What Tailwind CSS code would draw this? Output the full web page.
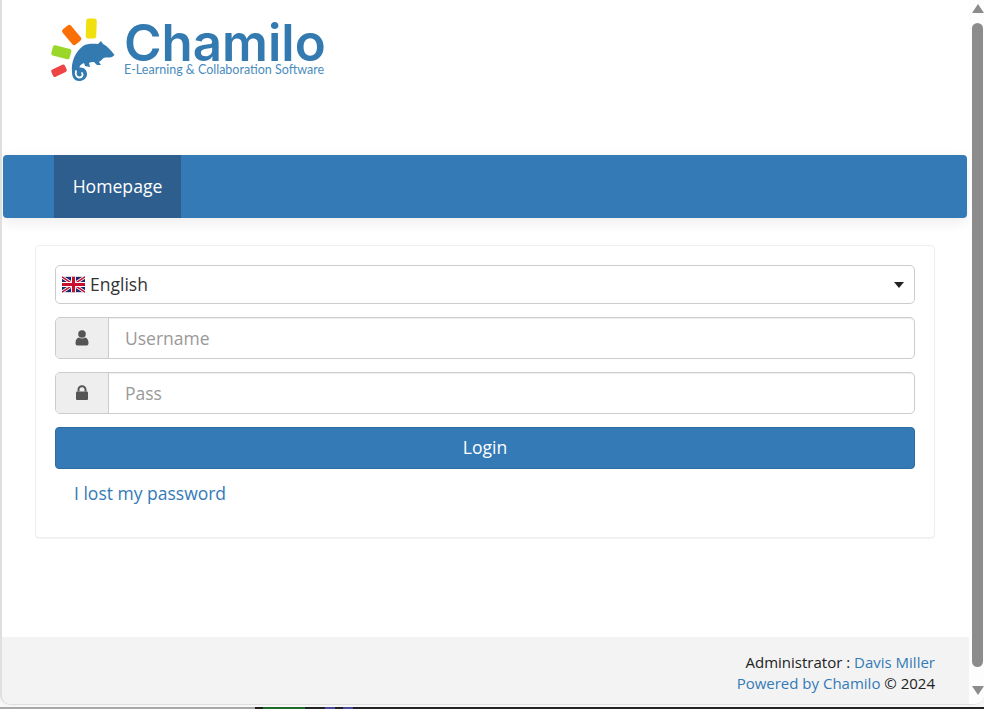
<!DOCTYPE html>
<html lang="en">
<head>
    <meta charset="UTF-8">
    <title>Chamilo - Homepage</title>
    <script src="https://cdn.jsdelivr.net/npm/@tailwindcss/browser@4"></script>
</head>
<body class="w-[984px] h-[709px] overflow-hidden bg-[#f6f6f6] font-['Open_Sans',sans-serif] text-[#222]">
    <!-- Window -->
    <div class="h-[705px] flex bg-white border-l-2 border-b border-[#dfdfdf] rounded-bl-[10px] rounded-br-[10px] overflow-hidden">
        <div class="w-[967px] flex flex-col shrink-0">
            <!-- Logo -->
            <header class="h-[155px] shrink-0 pl-[48px] pt-[15px]">
                <div class="flex items-start gap-[6px]">
                    <svg class="w-[68px] h-[68px] shrink-0" viewBox="50 15 68 68">
                        <rect x="86" y="18.500" width="10.500" height="20" rx="2.500" fill="#f0e010" transform="rotate(2 91 28)"/>
                        <rect x="66.200" y="25" width="11" height="20" rx="2.500" fill="#fb7006" transform="rotate(-40 71.700 35)"/>
                        <rect x="51.800" y="47" width="19" height="10.500" rx="2" fill="#9bd728" transform="rotate(15 61.300 52.300)"/>
                        <rect x="51.500" y="66.700" width="15" height="8" rx="2" fill="#ee4444" transform="rotate(-25 59 70.700)"/>
                        <path fill="#337ab0" d="M101 41 L103 44 C107 46 111 50 114.500 55 L112 57 C109 58 106 57 103.500 58 C102 60 100 61 99 62 L101 65 L97 65 L94 62 C92 62 90 62 89 63 L90 67 L85 66 L84 63 C81 64 79.500 66 79.500 67.500 C84 67 87 70 87 74 C87 78.500 83 81 79 81 C75 81 72 78 72 72 C71 62 75 52 83 46 C88 43 94 44 98 44 C99 43 100 42 101 41 Z"/>
                        <path fill="none" stroke="#fff" stroke-width="1.800" stroke-linecap="round" d="M76 71 C75 75 77 77.500 79.500 77.500 C82 77.500 83.500 75 82 73"/>
                    </svg>
                    <div class="text-[#337ab0]">
                        <div class="font-['Inter',sans-serif] font-semibold text-[51px] leading-[42px] mt-[7px]">Chamilo</div>
                        <div class="text-[12.500px] leading-[12px] font-['Lato',sans-serif] text-[#4a8cbd] whitespace-nowrap">E-Learning &amp; Collaboration Software</div>
                    </div>
                </div>
            </header>

            <!-- Nav -->
            <nav class="ml-px w-[964px] h-[63px] shrink-0 pl-[51px] flex bg-[#337ab7] rounded-[4px] shadow-[0_4px_14px_rgba(0,0,0,0.08)]">
                <a class="w-[127px] flex items-center justify-center bg-[#2e5e8e] text-white text-[17.600px]">Homepage</a>
            </nav>

            <!-- Login card -->
            <main class="mt-[27px] ml-[33px] w-[900px] h-[293px] shrink-0 p-[19px] bg-white border border-[#eeeeee] rounded-[4px] shadow-[0_1px_1px_rgba(0,0,0,0.05)] text-[17.500px]">
                <div class="h-[39px] flex items-center pl-[6px] pr-[10px] border border-[#cccccc] rounded-[5px]">
                    <svg class="w-[23px] h-[17px] mr-[5px]" viewBox="0 0 60 40">
                        <rect width="60" height="40" fill="#1b2a6b"/>
                        <path d="M0 0 L60 40 M60 0 L0 40" stroke="#fff" stroke-width="8"/>
                        <path d="M0 0 L60 40 M60 0 L0 40" stroke="#c8102e" stroke-width="4"/>
                        <path d="M30 0 V40 M0 20 H60" stroke="#fff" stroke-width="13"/>
                        <path d="M30 0 V40 M0 20 H60" stroke="#c8102e" stroke-width="8"/>
                    </svg>
                    <span class="text-[#333]">English</span>
                    <span class="ml-auto w-0 h-0 border-x-[5px] border-x-transparent border-t-[6px] border-t-[#222]"></span>
                </div>
                <div class="h-[42px] mt-[13px] flex border border-[#cccccc] rounded-[5px] overflow-hidden shadow-[inset_0_1px_1px_rgba(0,0,0,0.07)]">
                    <span class="w-[53px] flex items-center justify-center bg-[#eeeeee] border-r border-[#cccccc]">
                        <svg class="w-[14px] h-[16px]" viewBox="0 0 14 16" fill="#555"><circle cx="7" cy="4" r="3.800"/><path d="M0.500 13 C0.500 9.500 2 8 4 7.500 C5.500 8.700 8.500 8.700 10 7.500 C12 8 13.500 9.500 13.500 13 C13.500 15 12.500 15.500 11 15.500 H3 C1.500 15.500 0.500 15 0.500 13 Z"/></svg>
                    </span>
                    <span class="pl-[16px] flex items-center text-[#999]">Username</span>
                </div>
                <div class="h-[42px] mt-[13px] flex border border-[#cccccc] rounded-[5px] overflow-hidden shadow-[inset_0_1px_1px_rgba(0,0,0,0.07)]">
                    <span class="w-[53px] flex items-center justify-center bg-[#eeeeee] border-r border-[#cccccc]">
                        <svg class="w-[12px] h-[15px] mb-[2px]" viewBox="0 0 12 15" fill="#555"><path d="M1.500 6.500 V4.500 C1.500 2 3.500 0.300 6 0.300 C8.500 0.300 10.500 2 10.500 4.500 V6.500 H8.500 V4.500 C8.500 3.200 7.400 2.300 6 2.300 C4.600 2.300 3.500 3.200 3.500 4.500 V6.500 Z"/><rect y="6.500" width="12" height="8.500" rx="1"/></svg>
                    </span>
                    <span class="pl-[16px] flex items-center text-[#999]">Pass</span>
                </div>
                <button class="w-full h-[42px] mt-[13px] pb-[2px] bg-[#337ab7] border border-[#2e6da4] rounded-[4px] text-white">Login</button>
                <a class="block mt-[11px] ml-[19px] text-[#337ab7]">I lost my password</a>
            </main>

            <!-- Footer -->
            <footer class="mt-auto h-[67px] shrink-0 bg-[#f3f3f3] pt-[15px] pr-[34px] text-right text-[15px] leading-[21px]">
                <div>Administrator : <a class="text-[#337ab7]">Davis Miller</a></div>
                <div><a class="text-[#337ab7]">Powered by Chamilo</a> © 2024</div>
            </footer>
        </div>

        <!-- Scrollbar -->
        <div class="flex-1 flex flex-col items-center bg-[#fdfdfd] pl-[2px] pt-[4px]">
            <span class="w-0 h-0 border-x-[6px] border-x-transparent border-b-[9px] border-b-[#8c8c8c]"></span>
            <span class="w-[11px] h-[644px] mt-[10px] rounded-full bg-[#8c8c8c]"></span>
            <span class="w-0 h-0 mt-[19px] border-x-[6px] border-x-transparent border-t-[9px] border-t-[#8c8c8c]"></span>
        </div>
    </div>

    <!-- Desktop peeking out under the window -->
    <div class="h-[2px] mt-[1.500px] flex">
        <span class="w-[255px] bg-[#a8a8a8]"></span>
        <span class="w-[8px] bg-[#222]"></span>
        <span class="w-[42px] bg-[#1f6b2a]"></span>
        <span class="w-[20px] bg-[#222]"></span>
        <span class="w-[10px] bg-[#4a4a9a]"></span>
        <span class="w-[8px] bg-[#222]"></span>
        <span class="w-[10px] bg-[#4a4a9a]"></span>
        <span class="flex-1 bg-[#222]"></span>
    </div>
</body>
</html>
